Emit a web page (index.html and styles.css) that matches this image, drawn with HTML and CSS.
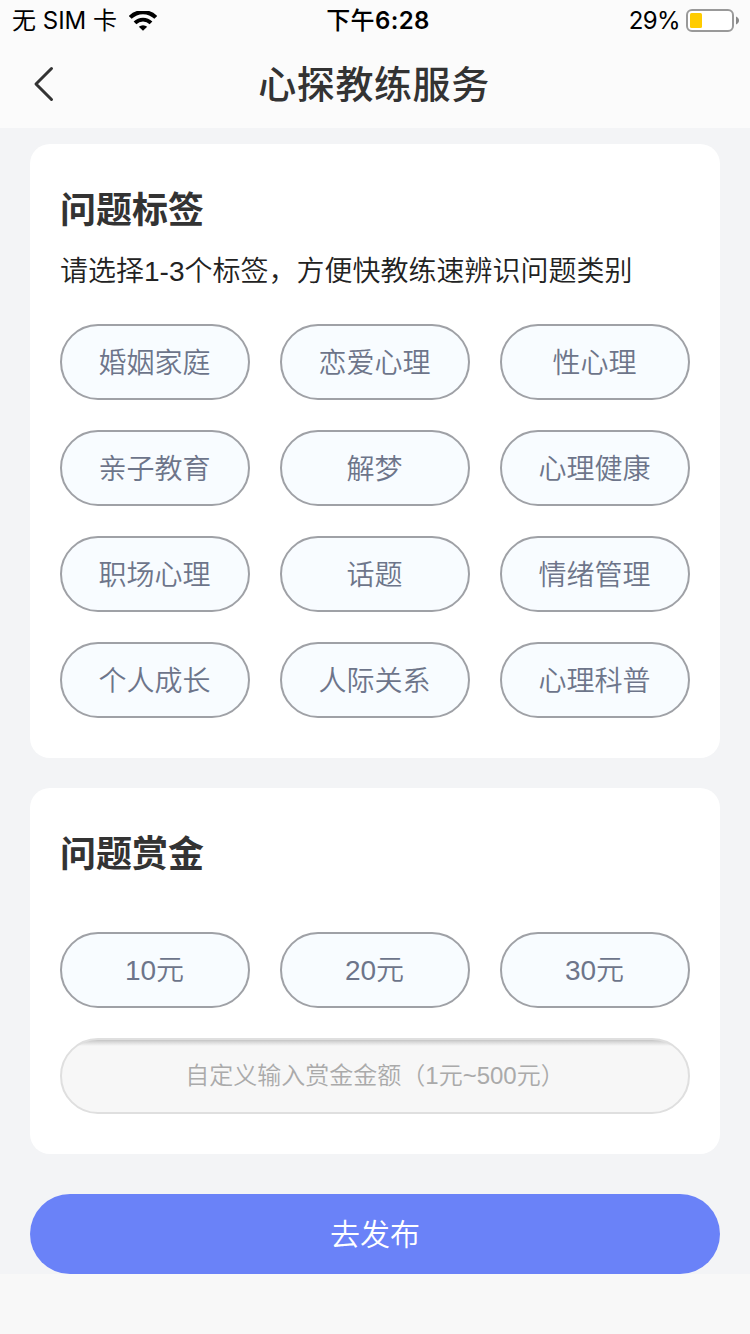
FILE: index.html
```
<!DOCTYPE html>
<html lang="zh-CN">
<head>
    <meta charset="UTF-8">
    <meta name="viewport" content="width=device-width, initial-scale=1.0">
    <title>心探教练服务</title>
    <link rel="stylesheet" href="styles.css">
</head>
<body>

    <div class="status-bar">
        <div class="status-left">
            <span>无 SIM 卡</span>
            <svg class="wifi" width="28" height="20" viewBox="0 0 28 20">
                <path d="M1.2 6.4 A18.2 18.2 0 0 1 26.8 6.4" fill="none" stroke="#000" stroke-width="4.1"/>
                <path d="M6 11.9 A11.4 11.4 0 0 1 22 11.9" fill="none" stroke="#000" stroke-width="3.9"/>
                <path d="M14 19.8 L9.8 15.8 A6.2 6.2 0 0 1 18.2 15.8 Z" fill="#000"/>
            </svg>
        </div>
        <div class="status-time">下午<b>6:28</b></div>
        <div class="status-right">
            <span class="percent">29%</span>
            <svg class="battery" width="54" height="24" viewBox="0 0 54 24">
                <rect x="1" y="1" width="46" height="21" rx="5" fill="#fff" stroke="#999" stroke-width="2"/>
                <rect x="4" y="4" width="12" height="15" rx="1.5" fill="#fc0"/>
                <path d="M50 7.5 C54 9 54 14 50 15.5 Z" fill="#888"/>
            </svg>
        </div>
    </div>

    <div class="nav-bar">
        <svg class="back" width="22" height="36" viewBox="0 0 22 36">
            <path d="M18.5 2.5 L3 18 L18.5 33.5" fill="none" stroke="#333" stroke-width="3" stroke-linecap="round" stroke-linejoin="round"/>
        </svg>
        <h1>心探教练服务</h1>
    </div>

    <div class="content">
        <div class="card">
            <h2>问题标签</h2>
            <p class="tip">请选择1-3个标签，方便快教练速辨识问题类别</p>
            <div class="tags">
                <button class="tag">婚姻家庭</button>
                <button class="tag">恋爱心理</button>
                <button class="tag">性心理</button>
                <button class="tag">亲子教育</button>
                <button class="tag">解梦</button>
                <button class="tag">心理健康</button>
                <button class="tag">职场心理</button>
                <button class="tag">话题</button>
                <button class="tag">情绪管理</button>
                <button class="tag">个人成长</button>
                <button class="tag">人际关系</button>
                <button class="tag">心理科普</button>
            </div>
        </div>

        <div class="card">
            <h2>问题赏金</h2>
            <div class="tags money">
                <button class="tag">10元</button>
                <button class="tag">20元</button>
                <button class="tag">30元</button>
            </div>
            <input class="custom" type="text" placeholder="自定义输入赏金金额（1元~500元）">
        </div>

        <button class="submit">去发布</button>
    </div>

</body>
</html>
```
FILE: styles.css
```
* {
    box-sizing: border-box;
}

body {
    margin: 0;
    background: #f8f8f8;
    font-family: "Liberation Sans", "Noto Sans CJK SC", sans-serif;
    color: #333;
}

h1, h2, p {
    margin: 0;
}

button, input {
    font-family: inherit;
    padding: 0;
}

.status-bar {
    display: grid;
    grid-template-columns: 1fr auto 1fr;
    height: 40px;
    line-height: 40px;
    padding: 1px 10px 0 12px;
    background: #fbfbfb;
    color: #000;
    font-family: Inter, "Noto Sans CJK SC", sans-serif;
    font-size: 24px;
}

.status-left {
    display: flex;
    align-items: center;
    gap: 12px;
}

.status-time {
    padding-left: 4px;
    font-weight: 500;
    letter-spacing: 0.4px;
}

.status-time b {
    font-weight: 600;
}

.status-right {
    display: flex;
    justify-content: flex-end;
    align-items: center;
    gap: 6px;
}

.percent {
    letter-spacing: -0.6px;
}

.nav-bar {
    display: grid;
    grid-template-columns: 60px 1fr 60px;
    align-items: center;
    height: 88px;
    background: #fbfbfb;
}

.back {
    margin-left: 33px;
}

h1 {
    padding: 2px 2px 0 0;
    font-size: 38px;
    font-weight: 500;
    line-height: 86px;
    letter-spacing: 0.6px;
    text-align: center;
}

.content {
    height: 1146px;
    padding: 16px 30px 0;
    background: #f3f4f6;
}

.card {
    margin-bottom: 30px;
    padding: 40px 30px;
    background: #fff;
    border-radius: 20px;
}

h2 {
    padding-top: 1px;
    font-size: 36px;
    font-weight: bold;
    line-height: 52px;
}

.tip {
    margin: 14px 0 32px;
    color: #222;
    font-size: 28px;
    font-weight: 350;
    line-height: 41px;
    white-space: nowrap;
}

.tags {
    display: grid;
    grid-template-columns: repeat(3, 190px);
    gap: 30px;
}

.tag {
    height: 76px;
    padding: 0 1px 3px 0;
    border: 2px solid #9fa1a6;
    border-radius: 38px;
    background: #f8fcff;
    color: #6d758a;
    font-size: 28px;
    font-weight: 350;
}

.money {
    margin: 51px 0 30px;
}

.money .tag {
    padding-bottom: 5px;
}

.custom {
    display: block;
    width: 100%;
    height: 76px;
    border: 2px solid #dfdfdf;
    border-radius: 38px;
    background: #f7f7f7 linear-gradient(#c4c4c4, #d8d8d8 2px, #f7f7f7 6px);
    font-size: 24px;
    font-weight: 350;
    text-align: center;
}

.custom::placeholder {
    color: #aaa;
}

.submit {
    display: block;
    width: 100%;
    height: 80px;
    margin-top: 40px;
    padding-bottom: 5px;
    border: none;
    border-radius: 40px;
    background: #6a82f8;
    color: #fff;
    font-size: 30px;
    font-weight: 350;
}
```
